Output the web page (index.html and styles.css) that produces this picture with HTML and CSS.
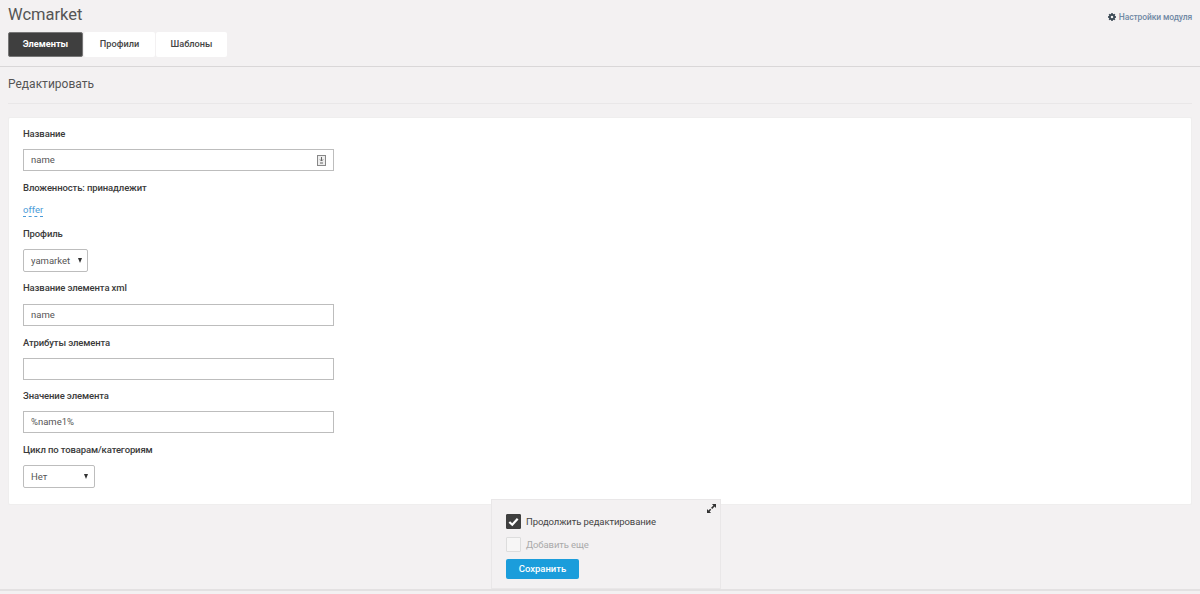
FILE: index.html
```html
<!DOCTYPE html>
<html lang="ru">
<head>
<meta charset="utf-8">
<title>Wcmarket</title>
<link rel="stylesheet" href="styles.css">
</head>
<body>
<header class="top">
  <div class="top-left">
    <h1 class="title">Wcmarket</h1>
    <nav class="tabs">
      <a class="tab tab-active">Элементы</a>
      <a class="tab tab-p">Профили</a>
      <a class="tab tab-s">Шаблоны</a>
    </nav>
  </div>
  <a class="settings">
    <svg class="gear" viewBox="0 0 10 10"><path fill="#3c4a55" fill-rule="evenodd" d="M4.100 0h1.800l.2 1.300.8.3 1-.8 1.300 1.300-.8 1 .3.8 1.300.2v1.800l-1.300.2-.3.8.8 1-1.300 1.300-1-.8-.8.3-.2 1.300H4.100l-.2-1.300-.8-.3-1 .8L.8 7.900l.8-1-.3-.8L0 5.900V4.100l1.300-.2.3-.8-.8-1L2.100.8l1 .8.8-.3zM5 3.400a1.600 1.600 0 1 0 0 3.200 1.600 1.600 0 0 0 0-3.200z"/></svg>
    Настройки модуля
  </a>
</header>
<main class="content">
  <h2 class="subtitle">Редактировать</h2>
  <form class="card">
    <div class="label">Название</div>
    <div class="input input-wide">name
      <svg class="lang" viewBox="0 0 9 11"><rect x=".5" y=".5" width="8" height="10" fill="#eee" stroke="#888"/><path d="M4.500 2v4M3 4.500 4.500 6 6 4.500M3 8h3" fill="none" stroke="#666"/></svg>
    </div>
    <div class="label">Вложенность: принадлежит</div>
    <div class="link-row"><a class="link">offer</a></div>
    <div class="label">Профиль</div>
    <div class="input select select-profile"><span>yamarket</span><span class="arrow"></span></div>
    <div class="label">Название элемента xml</div>
    <div class="input input-wide input-xml">name</div>
    <div class="label">Атрибуты элемента</div>
    <div class="input input-wide input-attr"></div>
    <div class="label">Значение элемента</div>
    <div class="input input-wide">%name1%</div>
    <div class="label">Цикл по товарам/категориям</div>
    <div class="input select select-cycle"><span>Нет</span><span class="arrow"></span></div>
  </form>
  <div class="panel-wrap">
    <div class="panel">
      <svg class="expand" viewBox="0 0 10 10"><path d="M5.500 0H10v4.500L8.400 2.900 5.800 5.500 4.500 4.200 7.100 1.600zM4.500 10H0V5.500l1.600 1.600 1.900-1.800 1.200 1.200-1.800 1.900z" fill="#333"/></svg>
      <div class="check-row">
        <span class="box box-on"><svg viewBox="0 0 14 14" class="tick"><path d="M2.500 7.500 5.700 10.500 11.500 4" fill="none" stroke="#fff" stroke-width="2.400"/></svg></span>
        <span>Продолжить редактирование</span>
      </div>
      <div class="check-row row-off">
        <span class="box"></span>
        <span>Добавить еще</span>
      </div>
      <button class="save" type="button">Сохранить</button>
    </div>
  </div>
</main>
<div class="bottom"></div>
</body>
</html>
```
FILE: styles.css
```css
* { box-sizing: border-box; }
html, body { height: 100%; }
body {
  margin: 0;
  height: 594px;
  overflow: hidden;
  position: relative;
  background: #f3f1f2;
  color: #333;
  font: 9.500px/14px Roboto, sans-serif;
}
.top {
  display: flex;
  justify-content: space-between;
  padding: 4px 8px 0;
  height: 67px;
  border-bottom: 1px solid #d9d7d8;
}
.title {
  margin: 0;
  height: 28px;
  font: 400 16.500px/21px Roboto, sans-serif;
  color: #555;
}
.tabs { display: flex; gap: 1px; }
.tab {
  height: 25px;
  background: #fff;
  border-radius: 2px;
  font-size: 9.200px;
  font-weight: 500;
  line-height: 23px;
  text-align: center;
  color: #444;
}
.tab-active { width: 75px; background: #3f3f3f; border: 1px solid #777; color: #fff; font-weight: 700; line-height: 22px; }
.tab-p { width: 71px; }
.tab-s { width: 71px; }
.settings {
  display: flex;
  align-items: center;
  gap: 3px;
  height: 14px;
  margin-top: 6px;
  color: #7189a5;
  font-size: 8.500px;
  font-weight: 500;
  letter-spacing: -.12px;
}
.gear { width: 8px; height: 8px; }
.content { padding: 0 8px; }
.subtitle {
  margin: 0;
  height: 37px;
  padding-top: 8px;
  border-bottom: 1px solid #e9e7e8;
  font: 400 12px/18px Roboto, sans-serif;
  color: #555;
}
.card {
  margin-top: 13px;
  height: 388px;
  padding: 8px 14px 0;
  background: #fff;
  border: 1px solid #efeeee;
  border-radius: 2px;
}
.label {
  height: 16px;
  line-height: 16px;
  font-weight: 500;
  color: #3a3a3a;
  letter-spacing: -.12px;
}
.input {
  position: relative;
  height: 22px;
  margin: 7px 0 9px;
  padding-left: 7px;
  border: 1px solid #bdbdbd;
  line-height: 20px;
  color: #555;
  background: #fff;
}
.input-wide { width: 311px; }
.input-xml { margin-top: 8px; }
.input-attr { margin-bottom: 8px; }
.lang { position: absolute; right: 7px; top: 5px; width: 9px; height: 11px; }
.link-row { height: 30px; padding-top: 7px; }
.link { color: #4a9bd8; border-bottom: 1px dashed #4a9bd8; display: inline-block; line-height: 13px; }
.select {
  display: flex;
  justify-content: space-between;
  align-items: center;
  padding-right: 6px;
  border-radius: 2px;
  height: 23px;
}
.select-profile { width: 65px; margin-bottom: 8px; padding-right: 5px; }
.select-cycle { width: 72px; }
.arrow {
  border-left: 2.500px solid transparent;
  border-right: 2.500px solid transparent;
  border-top: 5px solid #333;
}
.panel-wrap {
  position: absolute;
  left: 491px;
  top: 499px;
  width: 230px;
}
.panel {
  position: relative;
  height: 91px;
  padding: 14px 14px 0;
  background: #f3f1f2;
  border: 1px solid #e9e7e8;
  border-bottom-width: 2px;
}
.expand { position: absolute; right: 4px; top: 4px; width: 9px; height: 9px; }
.check-row {
  display: flex;
  align-items: center;
  gap: 5px;
  height: 15px;
  margin-bottom: 8px;
  color: #444;
  letter-spacing: -.1px;
}
.row-off { color: #aaa; margin-bottom: 7px; }
.box {
  flex: none;
  width: 15px;
  height: 15px;
  border: 1px solid #ddd;
  background: #f7f6f6;
  border-radius: 1px;
}
.box-on { background: #3f3f3f; border-color: #3f3f3f; display: flex; }
.tick { width: 13px; height: 13px; }
.save {
  display: block;
  width: 73px;
  height: 20px;
  padding: 0;
  border: 0;
  border-radius: 2px;
  background: #1b9ddb;
  color: #fff;
  font: 500 9.500px/20px Roboto, sans-serif;
}
.bottom {
  position: absolute;
  left: 0; right: 0; top: 589px; height: 5px;
  border-top: 2px solid #e3e1e2;
}
```
